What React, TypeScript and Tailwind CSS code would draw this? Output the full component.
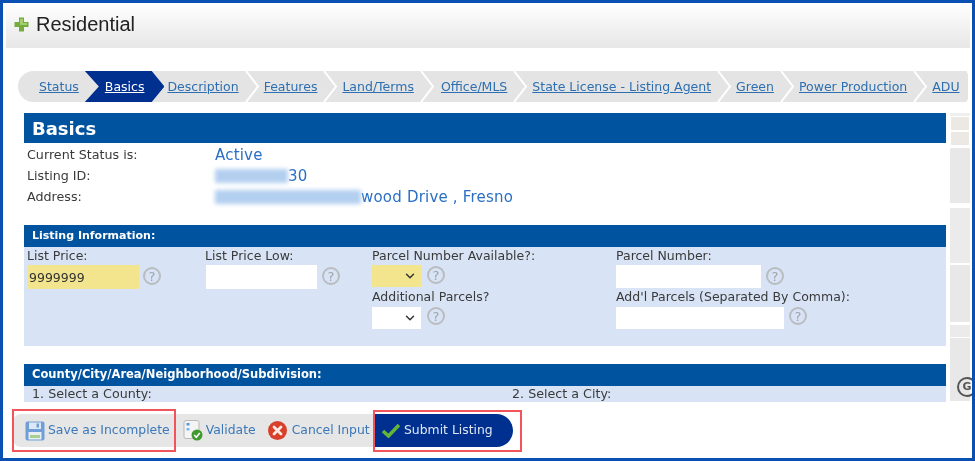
import { ChevronDown } from "lucide-react";

const tabs = ["Status", "Basics", "Description", "Features", "Land/Terms", "Office/MLS", "State License - Listing Agent", "Green", "Power Production", "ADU"];

function Help({ className = "" }: { className?: string }) {
  return (
    <span className={`flex h-[18px] w-[18px] shrink-0 items-center justify-center rounded-full border-2 border-[#b9bcc0] text-[13px] leading-none text-[#a0a3a7] ${className}`}>
      ?
    </span>
  );
}

function Chevron() {
  return (
    <svg className="absolute top-0 -right-[9.5px] z-10 h-[31px] w-[16px]" viewBox="0 0 16 31" fill="none">
      <path d="M1 0 L13 15.5 L1 31" stroke="#fff" strokeWidth="2" />
    </svg>
  );
}

function TabBar() {
  return (
    <div className="ml-[15px] flex h-[31px] w-[950px] overflow-hidden rounded-l-[16px] bg-[#e4e4e4] pl-[8.5px] text-[12.5px]">
      {tabs.map((t) =>
        t === "Basics" ? (
          <div key={t} className="relative z-20 -mr-[9.5px] -ml-[6.5px] flex items-center bg-[#00308f] px-[20px] pt-[1px] [clip-path:polygon(0_0,84%_0,100%_50%,84%_100%,0_100%,14px_50%)]">
            <a className="text-white underline">{t}</a>
          </div>
        ) : (
          <div key={t} className={`relative flex items-center px-[12.5px] pt-[1px] ${t === "Office/MLS" ? "ml-[2px]" : ""}`}>
            <a className="whitespace-nowrap text-[#2d6fb0] underline">{t}</a>
            {t !== "Status" && <Chevron />}
          </div>
        ),
      )}
    </div>
  );
}

function SectionBar({ children, className = "" }: { children: string; className?: string }) {
  return <div className={`flex h-[22px] items-center bg-[#00549f] pl-[8px] font-bold text-white ${className}`}>{children}</div>;
}

function Label({ children }: { children: string }) {
  return <div className="h-[17px] text-[12.5px] leading-[15px] whitespace-nowrap text-[#3a3a3a]">{children}</div>;
}

function Select({ yellow }: { yellow?: boolean }) {
  return (
    <div className={`flex h-[22px] w-[49px] items-center justify-end pr-[4px] ${yellow ? "bg-[#f3e58e]" : "bg-white"}`}>
      <ChevronDown size={14} strokeWidth={2.5} className="text-[#333]" />
    </div>
  );
}

function StatusRow({ label, children }: { label: string; children: React.ReactNode }) {
  return (
    <div className="flex h-[21px] items-center">
      <div className="w-[188px] text-[12.7px] text-[#3a3a3a]">{label}</div>
      <div className="flex items-center pt-[1px] text-[15px] tracking-[0.2px] text-[#2a6fc4]">{children}</div>
    </div>
  );
}

function Blurred({ width }: { width: string }) {
  return <span className={`inline-block h-[14px] bg-[#b3cff0] blur-[2px] ${width}`} />;
}

function SaveIcon() {
  return (
    <svg width="20" height="20" viewBox="0 0 20 20">
      <rect x="0.5" y="0.5" width="19" height="19" rx="2" fill="#6f9fd6" />
      <rect x="4" y="1.5" width="12" height="6.5" fill="#dce8f6" />
      <rect x="11.5" y="2.5" width="2.5" height="4" fill="#6f9fd6" />
      <rect x="3.5" y="11" width="13" height="7.5" fill="#e8eef4" />
      <rect x="5" y="14" width="10" height="3" fill="#a8cf8e" />
    </svg>
  );
}

function ValidateIcon() {
  return (
    <svg width="20" height="21" viewBox="0 0 20 21">
      <rect x="1" y="0.5" width="15" height="18" rx="2" fill="#f4f4f4" stroke="#b9b9b9" />
      <rect x="3.5" y="3" width="3" height="2.5" fill="#4f9ad8" />
      <rect x="3.5" y="8" width="3" height="2.5" fill="#7fb6e2" />
      <circle cx="14" cy="15" r="5.5" fill="#3f9a2f" />
      <path d="M11.2 15 L13.3 17.2 L16.8 13" fill="none" stroke="#fff" strokeWidth="1.6" />
    </svg>
  );
}

function CancelIcon() {
  return (
    <svg width="19" height="19" viewBox="0 0 19 19">
      <circle cx="9.5" cy="9.5" r="9.5" fill="#d9402b" />
      <path d="M6 6 L13 13 M13 6 L6 13" stroke="#fbe9e2" strokeWidth="2.8" strokeLinecap="round" />
    </svg>
  );
}

function CheckIcon() {
  return (
    <svg width="18" height="15" viewBox="0 0 18 15">
      <path d="M1 8 L6.5 13 L17 2" fill="none" stroke="#63b53a" strokeWidth="3.5" />
    </svg>
  );
}

function PlusIcon() {
  return (
    <svg width="15" height="15" viewBox="0 0 15 15">
      <path d="M5 0.5 H10 V5 H14.5 V10 H10 V14.5 H5 V10 H0.5 V5 H5 Z" fill="#75ad3d" />
      <path d="M6 2 H9 V6 H13 V8 H6 Z" fill="#a5cf6e" />
    </svg>
  );
}

function ScrollStrip() {
  return (
    <div className="relative ml-[4px] flex h-[288px] w-[20px] flex-col">
      <div className="h-[3px] bg-[#efefef]" />
      <div className="mx-[1px] mt-[1px] h-[13px] bg-[#ece9e4]" />
      <div className="mx-[1px] mt-[2px] h-[13px] bg-[#ece9e4]" />
      <div className="mt-[3px] h-[55px] bg-[#e8e8e8]" />
      <div className="mt-[5px] h-[55px] bg-[#ebebeb]" />
      <div className="mt-[2px] h-[57px] bg-[#e8e8e8]" />
      <div className="mt-[3px] h-[12px] bg-[#ebebeb]" />
      <div className="mt-[1px] flex-1 bg-[#e8e8e8]" />
      <span className="absolute top-[264px] left-[7px] flex h-[20px] w-[20px] items-center justify-center rounded-full border-[2.5px] border-[#555] text-[11px] font-bold text-[#555]">
        G
      </span>
    </div>
  );
}

export default function App() {
  return (
    <div className="relative h-[461px] w-[975px] overflow-hidden border-[3px] border-[#0a50b2] bg-white font-['DejaVu_Sans','Liberation_Sans',sans-serif] blur-[0.4px]">
      <div className="mr-[2px] ml-[3px] flex h-[45px] items-center bg-gradient-to-b from-white to-[#e7e7e7] pb-[3px] pl-[8px]">
        <PlusIcon />
        <span className="ml-[7px] font-['Liberation_Sans',sans-serif] text-[20px] text-[#222]">Residential</span>
      </div>

      <div className="mt-[23px]">
        <TabBar />
      </div>

      <div className="mt-[11px] ml-[21px] flex">
        <div className="w-[922px]">
          <div className="flex h-[30px] items-center bg-[#00549f] pl-[8px] text-[18px] font-bold text-white">Basics</div>
          <div className="mt-[1px] pl-[3px]">
            <StatusRow label="Current Status is:">Active</StatusRow>
            <StatusRow label="Listing ID:">
              <Blurred width="w-[73px]" />
              <span>30</span>
            </StatusRow>
            <StatusRow label="Address:">
              <Blurred width="w-[146px]" />
              <span className="whitespace-nowrap">wood Drive , Fresno</span>
            </StatusRow>
          </div>

          <div className="mt-[18px]">
            <SectionBar className="text-[11px]">Listing Information:</SectionBar>
            <div className="grid h-[99px] grid-cols-[178px_167px_244px_1fr] bg-[#d8e4f5] pt-[1px] pl-[3px]">
              <div>
                <Label>List Price:</Label>
                <div className="flex items-start gap-[4px]">
                  <input readOnly value="9999999" className="ml-[1px] h-[24px] w-[111px] bg-[#f3e58e] pl-[1px] text-[12.5px] text-[#333] outline-none" />
                  <Help className="mt-[2px]" />
                </div>
              </div>
              <div>
                <Label>List Price Low:</Label>
                <div className="flex items-start gap-[5px]">
                  <input readOnly className="ml-[1px] h-[24px] w-[111px] bg-white outline-none" />
                  <Help className="mt-[2px]" />
                </div>
              </div>
              <div>
                <Label>Parcel Number Available?:</Label>
                <div className="flex items-start gap-[6px]">
                  <Select yellow />
                  <Help className="mt-[1px]" />
                </div>
                <div className="mt-[2px]">
                  <Label>Additional Parcels?</Label>
                </div>
                <div className="mt-[1px] flex items-start gap-[6px]">
                  <Select />
                  <Help />
                </div>
              </div>
              <div>
                <Label>Parcel Number:</Label>
                <div className="flex items-start gap-[5px]">
                  <input readOnly className="h-[23px] w-[145px] bg-white outline-none" />
                  <Help className="mt-[2px]" />
                </div>
                <div className="mt-[1px]">
                  <Label>Add'l Parcels (Separated By Comma):</Label>
                </div>
                <div className="mt-[1px] flex items-start gap-[5px]">
                  <input readOnly className="h-[22px] w-[168px] bg-white outline-none" />
                  <Help />
                </div>
              </div>
            </div>
          </div>

          <div className="mt-[18px]">
            <SectionBar className="text-[11.5px]">County/City/Area/Neighborhood/Subdivision:</SectionBar>
            <div className="grid h-[16px] grid-cols-[480px_1fr] bg-[#d8e4f5] pl-[8px] text-[12.7px] leading-[16px] text-[#3a3a3a]">
              <div>1. Select a County:</div>
              <div>2. Select a City:</div>
            </div>
          </div>
        </div>
        <ScrollStrip />
      </div>

      <div className="mt-[12px] ml-[10px] flex h-[33px] w-[500px] text-[12.4px]">
        <div className="flex w-[362px] items-center rounded-l-[8px] bg-[#e6e6e6] text-[#3a78b8]">
          <div className="ml-[12px] flex items-center gap-[3px]">
            <SaveIcon />
            <span className="whitespace-nowrap">Save as Incomplete</span>
          </div>
          <div className="ml-[13px] flex items-center gap-[3px]">
            <ValidateIcon />
            <span>Validate</span>
          </div>
          <div className="ml-[12px] flex items-center gap-[5px]">
            <CancelIcon />
            <span className="whitespace-nowrap">Cancel Input</span>
          </div>
        </div>
        <div className="flex w-[138px] items-center gap-[4px] rounded-r-[17px] bg-[#00308f] pl-[7px] text-[#dfe6f2]">
          <CheckIcon />
          <span className="whitespace-nowrap">Submit Listing</span>
        </div>
      </div>

      <div className="absolute top-[406px] left-[9px] h-[43px] w-[164px] border-2 border-[#f2545b]" />
      <div className="absolute top-[407px] left-[370px] h-[42px] w-[149px] border-2 border-[#f2545b]" />
    </div>
  );
}
